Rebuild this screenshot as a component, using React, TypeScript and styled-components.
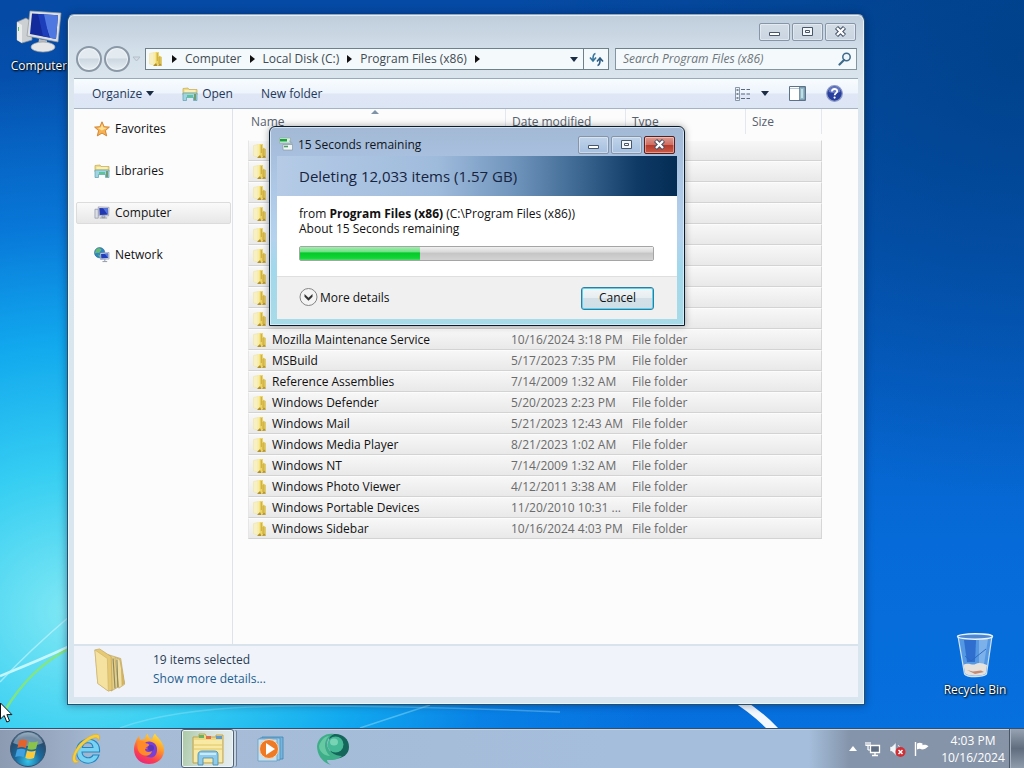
import React from 'react';
import styled, { createGlobalStyle } from 'styled-components';

const GlobalStyle = createGlobalStyle`
  * { box-sizing: border-box; }
  html, body { margin: 0; height: 100%; overflow: hidden; }
  body, button, input, table {
    font-family: 'Open Sans', 'Noto Sans', sans-serif;
    font-size: 12px;
    line-height: 16px;
  }
  button { padding: 0; border: 0; background: none; color: inherit; }
  a { text-decoration: none; color: inherit; }
  svg { display: block; flex: none; }
  #root { height: 100%; }
`;

const Screen = styled.div`
  display: flex;
  flex-direction: column;
  height: 100vh;
`;

const Desktop = styled.main`
  position: relative;
  flex: 1;
  overflow: hidden;
  background:
    radial-gradient(ellipse 58% 74% at 7% 84%, rgba(128, 232, 244, 1) 0%, rgba(54, 206, 242, 1) 26%, rgba(18, 172, 240, 0.95) 50%, rgba(10, 140, 235, 0.6) 72%, rgba(10, 120, 225, 0) 100%),
    radial-gradient(ellipse 50% 60% at 100% 8%, rgba(0, 64, 134, 0.85) 0%, rgba(0, 70, 150, 0) 100%),
    linear-gradient(180deg, #054aa4 0%, #055bc0 40%, #066bd8 75%, #0670de 100%);
`;

const Wallpaper = styled.svg`
  position: absolute;
  inset: 0;
  width: 100%;
  height: 100%;
`;

const Shortcut = styled.button<{ $place: 'top' | 'bottom' }>`
  position: absolute;
  ${p => (p.$place === 'top' ? 'left: 0; top: 8px;' : 'right: 10px; bottom: 30px;')}
  width: 78px;
  display: flex;
  flex-direction: column;
  align-items: center;
  gap: 4px;
  color: #fff;
  text-shadow: 1px 1px 2px #000, 0 0 2px #000;
`;

const Cursor = styled.svg`
  position: absolute;
  left: 0;
  bottom: 4px;
`;

/* ---------- Explorer window ---------- */

const Explorer = styled.section`
  position: absolute;
  left: 67px;
  right: 159px;
  top: 14px;
  bottom: 23px;
  display: flex;
  flex-direction: column;
  padding: 0 6px 7px;
  border: 1px solid #274f6c;
  border-top-color: #93a9bb;
  border-radius: 7px 7px 0 0;
  background: linear-gradient(180deg, #bfcddb 0, #d3dfe9 36px, #dbe6ee 70px, #d9e6ef 100%);
  box-shadow: inset 0 0 0 1px rgba(240, 248, 255, 0.8), 0 0 8px rgba(0, 20, 60, 0.45);
`;

const Titlebar = styled.header<{ $height: number; $top?: number }>`
  display: flex;
  align-items: center;
  height: ${p => p.$height}px;
  padding: ${p => p.$top ?? 0}px 2px 0;
`;

const Caption = styled.div`
  display: flex;
  gap: 2px;
  margin-left: auto;
`;

const CaptionButton = styled.button<{ $kind?: 'close' | 'blue' }>`
  display: grid;
  place-items: center;
  width: 31px;
  height: 18px;
  border: 1px solid ${p => (p.$kind === 'close' ? '#5c1d1d' : '#8795a8')};
  border-radius: 2px;
  box-shadow: inset 0 0 0 1px rgba(255, 255, 255, 0.4);
  background: ${p =>
    p.$kind === 'close'
      ? 'linear-gradient(#dd9a90 0, #cf6d60 48%, #b43a2c 50%, #cb5b46 100%)'
      : p.$kind === 'blue'
        ? 'linear-gradient(#c0d3ea, #a6c0df)'
        : 'linear-gradient(#d3dde7, #c9d5e1)'};
`;

const AddressRow = styled.div`
  display: flex;
  align-items: center;
  height: 22px;
  margin-bottom: 8px;
  padding-right: 1px;
`;

const NavButtons = styled.div`
  display: flex;
  align-items: center;
  width: 71px;
  gap: 2px;
  padding-left: 2px;
`;

const RoundButton = styled.button`
  width: 26px;
  height: 26px;
  border: 2px solid #8b98a6;
  border-radius: 50%;
  background: linear-gradient(#e3ebf1 0 45%, #ccd7e0 50%, #e6eef4 100%);
  box-shadow: inset 0 0 0 1px #eef3f7;
`;

const AddressBox = styled.div`
  display: flex;
  flex: 1;
  align-items: stretch;
  height: 22px;
  border: 1px solid #6e8089;
  background: #f4f9fc;
`;

const Crumbs = styled.nav`
  display: flex;
  flex: 1;
  align-items: center;
  gap: 8px;
  padding: 0 5px 0 2px;
  color: #414b52;
`;

const CrumbButton = styled.button`
  white-space: nowrap;
`;

const RefreshButton = styled.button`
  display: grid;
  place-items: center;
  width: 25px;
  border-left: 1px solid #6e8089;
`;

const SearchBox = styled.label`
  display: flex;
  align-items: center;
  width: 242px;
  height: 22px;
  margin-left: 6px;
  padding: 0 4px 0 7px;
  border: 1px solid #8495a0;
  border-top-color: #6e8089;
  background: #f4f9fc;
`;

const SearchInput = styled.input`
  flex: 1;
  min-width: 0;
  padding: 0;
  border: 0;
  outline: 0;
  background: transparent;
  font-style: italic;
  &::placeholder { color: #6d7579; opacity: 1; }
`;

const Body = styled.div`
  display: flex;
  flex: 1;
  flex-direction: column;
  min-height: 0;
  border-top: 1px solid #97a9bb;
  background: #fcfcfc;
`;

const Toolbar = styled.div`
  display: flex;
  align-items: center;
  height: 30px;
  padding: 0 15px 0 18px;
  border-bottom: 1px solid #a5b3c6;
  background: linear-gradient(#f8fcff 0, #eef4fc 48%, #dfe7f6 52%, #dde6f5 100%);
  color: #1e395b;
`;

const ToolButton = styled.button`
  display: flex;
  align-items: center;
  gap: 4px;
`;

const ToolGroup = styled.div<{ $gap: number; $end?: boolean }>`
  display: flex;
  align-items: center;
  gap: ${p => p.$gap}px;
  margin-left: ${p => (p.$end ? 'auto' : '0')};
`;

const Panes = styled.div`
  display: flex;
  flex: 1;
  min-height: 0;
`;

const Sidebar = styled.nav`
  display: flex;
  flex-direction: column;
  gap: 20px;
  width: 159px;
  padding: 9px 1px 0 2px;
  border-right: 1px solid #dde3ec;
`;

const SideLink = styled.a<{ $active?: boolean }>`
  display: flex;
  align-items: center;
  gap: 5px;
  height: 22px;
  padding-left: 17px;
  border: 1px solid ${p => (p.$active ? '#dcdcdc' : 'transparent')};
  border-radius: 2px;
  background: ${p => (p.$active ? 'linear-gradient(#fafafa, #e7e7e7)' : 'none')};
  color: #111;
`;

const ListPane = styled.div`
  flex: 1;
  padding-left: 15px;
  min-width: 0;
  overflow: hidden;
`;

const FileTable = styled.table`
  width: 574px;
  table-layout: fixed;
  border-collapse: separate;
  border-spacing: 0;
  color: #6b6b6b;
`;

const HeadCell = styled.th<{ $width: number }>`
  position: relative;
  width: ${p => p.$width}px;
  height: 31px;
  padding: 5px 0 0 6px;
  vertical-align: top;
  text-align: left;
  font-weight: 400;
  color: #56606e;
  background: linear-gradient(#e3e8ef, #e3e8ef) right top / 1px 25px no-repeat;
  &:first-child { padding-left: 3px; }
`;

const SortMark = styled.svg`
  position: absolute;
  left: 123px;
  top: 1px;
`;

const Row = styled.tr`
  background: linear-gradient(#f8f8f8, #e8e8e8);
`;

const Cell = styled.td`
  height: 21px;
  padding: 0 0 0 6px;
  border-top: 1px solid #fcfcfc;
  border-bottom: 1px solid #d3d3d3;
  overflow: hidden;
  white-space: nowrap;
  &:first-child { padding-left: 3px; border-left: 1px solid #e6e6e6; }
  &:nth-child(2) { padding-left: 5px; }
  &:last-child { border-right: 1px solid #d6d6d6; }
`;

const NameLine = styled.span`
  display: flex;
  align-items: center;
  gap: 4px;
  color: #111;
`;

const Details = styled.footer`
  display: flex;
  align-items: center;
  gap: 22px;
  height: 53px;
  padding: 0 0 4px 18px;
  border-top: 2px solid #d9e3ec;
  background: #f0f4fa;
`;

const DetailText = styled.div`
  display: flex;
  flex-direction: column;
  gap: 3px;
  color: #2b3c55;
`;

const DetailLink = styled.a`
  color: #1d6091;
`;

/* ---------- Progress dialog ---------- */

const Dialog = styled.section`
  position: absolute;
  left: 269px;
  top: 126px;
  width: 416px;
  padding: 0 7px 6px;
  border: 1px solid #0d1c2b;
  border-radius: 6px 6px 0 0;
  background: linear-gradient(180deg, #a3b9d6 0, #adc8e6 60px, #b4d2ee 110px, #a2d8ec 140px, #a8dbe8 100%);
  box-shadow: inset 0 0 0 1px rgba(225, 242, 252, 0.75), 0 0 7px rgba(0, 0, 0, 0.35);
`;

const DialogTitle = styled.h1`
  display: flex;
  align-items: center;
  gap: 5px;
  margin: 0;
  font-size: 12px;
  font-weight: 400;
  color: #10151c;
`;

const Banner = styled.h2`
  display: flex;
  align-items: center;
  height: 40px;
  margin: 0;
  padding-left: 22px;
  font-size: 15px;
  line-height: 22px;
  font-weight: 400;
  color: #16243f;
  background: linear-gradient(90deg, #b5cbe6 0, #9fbbdc 40%, #6e93bb 60%, #3b6690 76%, #0f3a66 90%, #042c54 100%);
`;

const DialogBody = styled.div`
  height: 80px;
  padding: 10px 23px 0 22px;
  background: #fff;
  color: #111;
`;

const Line = styled.p`
  margin: 0;
  line-height: 15px;
`;

const Progress = styled.progress`
  display: block;
  width: 100%;
  height: 15px;
  margin-top: 10px;
  appearance: none;
  border: 1px solid #a5a5a5;
  border-radius: 2px;
  &::-webkit-progress-bar {
    background: linear-gradient(#f0f0f0 0, #dcdcdc 35%, #c6c6c6 50%, #d3d3d3 100%);
  }
  &::-webkit-progress-value {
    background: linear-gradient(#a3eeb0 0, #6fe084 38%, #05c92a 45%, #10d534 85%, #4bdc66 100%);
  }
`;

const DialogFoot = styled.div`
  display: flex;
  align-items: center;
  justify-content: space-between;
  height: 43px;
  padding: 0 23px 0 22px;
  border-top: 1px solid #dfdfdf;
  background: #f0f0f0;
  color: #111;
`;

const MoreButton = styled.button`
  display: flex;
  align-items: center;
  gap: 2px;
`;

const CancelButton = styled.button`
  width: 73px;
  height: 23px;
  border: 1px solid #2c7f9f;
  border-radius: 3px;
  box-shadow: inset 0 0 0 1px #5fd0ee;
  background: linear-gradient(#f2f6f8 0, #e6edf0 48%, #d3dfe6 50%, #cfe0e8 100%);
`;

/* ---------- Taskbar ---------- */

const Taskbar = styled.footer`
  display: flex;
  align-items: center;
  height: 40px;
  border-top: 1px solid #33506e;
  box-shadow: inset 0 1px 0 #c5d5e6;
  background: linear-gradient(90deg, #8d9bb2 0, #98a8c0 5%, #a6bbd6 10%, #a5bedb 60%, #a5bedb 79%, #8494aa 83%, #8794a8 100%);
`;

const StartButton = styled.button`
  display: grid;
  place-items: center;
  width: 56px;
  height: 100%;
`;

const TaskButton = styled.button<{ $active?: boolean }>`
  display: grid;
  place-items: center;
  width: ${p => (p.$active ? 53 : 62)}px;
  height: 39px;
  margin: ${p => (p.$active ? '0 6px 0 1px' : '0')};
  border: ${p => (p.$active ? '1px solid #506278' : '0')};
  border-radius: 3px;
  box-shadow: ${p => (p.$active ? 'inset 0 0 0 1px #eef5f2, 3px 0 0 -1px #c5d3e2, 4px 0 0 -1px #6d7f96' : 'none')};
  background: ${p => (p.$active ? 'linear-gradient(100deg, #a9c8a4 0, #d3e0d8 45%, #e6edf0 100%)' : 'none')};
`;

const Tray = styled.div`
  display: flex;
  align-items: center;
  gap: 8px;
  height: 100%;
  margin-left: auto;
`;

const Clock = styled.time`
  width: 72px;
  text-align: center;
  color: #fff;
  line-height: 17px;
`;

const ShowDesktop = styled.button`
  width: 15px;
  height: 100%;
  border-left: 1px solid #4a5666;
  box-shadow: inset 1px 0 0 #aab6c4;
  background: linear-gradient(#97a3b2, #5f6d7e 50%, #8f9cac);
`;

/* ---------- Drawings ---------- */

const FolderIcon = () => (
  <svg width="16" height="16" viewBox="0 0 16 16" aria-hidden="true">
    <path d="M1.500 2.500 6 1.500v12.500l-4.500-1z" fill="#f8f0c0" stroke="#efe4a8" strokeWidth=".6" />
    <path d="M6 1h5v13.500l-5 .3z" fill="#ecd566" />
    <path d="M6 1h1.700v12H6z" fill="#f9ee9e" />
    <path d="M10.800 4.500 13.800 6v8.500h-3z" fill="#dcc257" />
    <path d="M9.300 2v8M11 6v7" stroke="#c8a63a" strokeWidth=".9" />
    <path d="M5 15l3-3 1.500 3zM10 15l2-2.500 2 2z" fill="#b08f30" />
  </svg>
);

const LibraryIcon = () => (
  <svg width="16" height="16" viewBox="0 0 16 16" aria-hidden="true">
    <path d="M1 2.500 6 2l1 1.500h8V9H1z" fill="#f0dc80" stroke="#c3aa56" strokeWidth=".7" />
    <path d="M2.500 5h11" stroke="#fff7cf" strokeWidth="1.400" />
    <path d="M1 7h14v7.500h-3.500V11.500h-7v3H1z" fill="#a0d4e2" stroke="#5b9db0" strokeWidth=".7" />
    <path d="M5 11.500V9h6v2.500" fill="#5cc49a" />
    <path d="M12 8h2v6h-2z" fill="#6f9c74" />
  </svg>
);

const StarIcon = () => (
  <svg width="16" height="16" viewBox="0 0 16 16" aria-hidden="true">
    <path d="m8 .8 2.100 4.900 5.300.4-4 3.500 1.300 5.300L8 12.100l-4.700 2.800 1.300-5.300-4-3.500 5.300-.4z" fill="#f6b352" stroke="#cf7d2d" strokeWidth=".9" strokeLinejoin="round" />
    <path d="m8 3 1.300 3.500 3.500.5-5 2.500-4-2.500 3-.5z" fill="#ffe19a" />
  </svg>
);

const PcIcon = () => (
  <svg width="16" height="16" viewBox="0 0 17 16" aria-hidden="true">
    <path d="M1 4h3.500v9.500H1z" fill="#dcdfe6" stroke="#878da0" strokeWidth=".7" />
    <path d="M4.500 1.500 16 2l-.5 9H5z" fill="#e1e4ec" stroke="#8b90a5" strokeWidth=".7" />
    <path d="m5.600 2.600 9.300.3-.4 7-8.500.1z" fill="#2138b2" />
    <path d="m9.500 2.700 5.400.2-.4 7z" fill="#5674da" />
    <path d="M8.500 11h3v2h-3zM6 13.300h8" stroke="#9097a8" fill="#c9cdd8" />
  </svg>
);

const NetworkIcon = () => (
  <svg width="16" height="16" viewBox="0 0 17 17" aria-hidden="true">
    <circle cx="6" cy="6" r="5.500" fill="#2f86c4" stroke="#27618f" strokeWidth=".6" />
    <path d="M2 3c2-2.500 5-2 6 0L5.500 6.500 3 6l-2 1zM4 8l3 1-1 2z" fill="#66bb72" />
    <path d="M6.500 6.500 16 5.800v7l-9 .5z" fill="#dfe4f0" stroke="#7c86a0" strokeWidth=".6" />
    <path d="M7.500 7.500 15 6.800v5l-7.300.4z" fill="#223eb8" />
    <path d="m11.500 7.100 3.500-.3v5z" fill="#5878dd" />
    <path d="M9 15.500h5M11.500 13v2" stroke="#8d95a6" />
  </svg>
);

const BigPcIcon = () => (
  <svg width="46" height="46" viewBox="0 0 46 46" aria-hidden="true">
    <path d="m1 14 9-4 6 4v18L6 35l-5-3z" fill="#cdd0d2" stroke="#878d92" strokeWidth=".7" />
    <path d="m1 14 5 3v18l-5-3z" fill="#e9ebec" />
    <path d="M2.500 19v4" stroke="#4fbb65" />
    <path d="M14 3 45 5l-3 29L11 28z" fill="#dde0e3" stroke="#92989d" strokeWidth=".7" />
    <path d="m16 5.500 26 1.800L40 31l-26-5z" fill="#122a9c" />
    <path d="M26 6.200 42 7.300 40 31l-6-1.200z" fill="#4f78e0" />
    <path d="m22 6 6 .3 5 23-6-1z" fill="#1c3ebb" />
    <path d="m23 31 8 1.500v5h-9z" fill="#b9bdc1" />
    <ellipse cx="27" cy="39" rx="12" ry="5" fill="#e4e6e7" stroke="#9ca1a5" strokeWidth=".7" />
  </svg>
);

const BinIcon = () => (
  <svg width="40" height="46" viewBox="0 0 40 46" aria-hidden="true">
    <path d="M3 4h34l-5.500 38c-4 3.500-19 3.500-22 0z" fill="#6fa6e6" fillOpacity=".75" stroke="#cfe2f6" strokeWidth="1.200" />
    <path d="M9 8h12l-1 22h-8z" fill="#1f5dc4" fillOpacity=".7" />
    <path d="m24 8 9-1-4 25-5 2z" fill="#a6ccf2" fillOpacity=".5" />
    <path d="M8.500 33c5-3 9 1 12-1s7-1 11.500 1l-1.200 8.500c-4 3-17 3-20.600 0z" fill="#e5e2dd" />
    <path d="m12 38 6 1.500 8-1 3 1.500-9 2z" fill="#c68b72" />
    <path d="m10 24 6 5 5-4 10-8" stroke="#2b66c0" strokeWidth=".9" fill="none" />
    <ellipse cx="20" cy="4.500" rx="17.500" ry="2.700" fill="#4f88d2" stroke="#e9f3fc" strokeWidth="1.400" />
  </svg>
);

const StackIcon = () => (
  <svg width="39" height="46" viewBox="0 0 39 48" preserveAspectRatio="xMinYMid meet" aria-hidden="true">
    <path d="m17 8 13 4 4 26-14 8z" fill="#e6cd85" stroke="#b59a52" strokeWidth=".6" />
    <path d="m24 11 5 2 5 26-6 4z" fill="#f0dfa4" stroke="#b59a52" strokeWidth=".6" />
    <path d="m30 16 4 22-3 3z" fill="#d3b261" />
    <path d="m22 12 2 31M26 13l1 29" stroke="#8b8a64" strokeWidth="1.200" />
    <path d="m3 3 5-1 12 8 1 35-4 1L6 38z" fill="#e6c974" stroke="#b79b52" strokeWidth=".6" />
    <path d="m3 3 13 9 1 34L6 38z" fill="#f5e2a0" stroke="#c9b069" strokeWidth=".6" />
  </svg>
);

const MinGlyph = () => (
  <svg width="13" height="11" viewBox="0 0 13 11" aria-hidden="true">
    <path d="M1.500 6.500h10v3h-10z" fill="#fff" stroke="#48566a" />
  </svg>
);

const MaxGlyph = () => (
  <svg width="13" height="11" viewBox="0 0 13 11" aria-hidden="true">
    <path d="M1.500 1.500h10v8h-10z" fill="#f5f8fb" stroke="#48566a" />
    <path d="M4.500 4.500h4v2h-4z" fill="#fff" stroke="#48566a" />
  </svg>
);

const CloseGlyph = () => (
  <svg width="13" height="11" viewBox="0 0 13 11" aria-hidden="true">
    <path d="m2.500 1.500 8 8m0-8-8 8" stroke="#48566a" strokeWidth="4.400" />
    <path d="m3 2 7 7m0-7-7 7" stroke="#fff" strokeWidth="2.300" />
  </svg>
);

const RightArrow = () => (
  <svg width="5" height="8" viewBox="0 0 5 8" aria-hidden="true">
    <path d="M0 0v8l5-4z" fill="#111" />
  </svg>
);

const DownArrow = () => (
  <svg width="8" height="5" viewBox="0 0 8 5" aria-hidden="true">
    <path d="M0 0h8L4 5z" fill="#1b2c45" />
  </svg>
);

const RefreshIcon = () => (
  <svg width="15" height="15" viewBox="0 0 15 15" aria-hidden="true">
    <path d="M6.500 1.500C4.500 2 3.800 4 4 8M1 5.500l3 3.500 3-3.500" fill="none" stroke="#39759b" strokeWidth="1.600" />
    <path d="M8.500 13.500c2-.5 2.700-2.500 2.500-6.500M8 9.500 11 6l3 3.500" fill="none" stroke="#2b5a80" strokeWidth="1.600" />
  </svg>
);

const SearchIcon = () => (
  <svg width="14" height="14" viewBox="0 0 14 14" aria-hidden="true">
    <circle cx="8.500" cy="5" r="3.700" fill="#eef6fb" stroke="#3d6a8b" strokeWidth="1.500" />
    <path d="m6 8-4.500 4.500" stroke="#3d6a8b" strokeWidth="2.200" strokeLinecap="round" />
  </svg>
);

const ViewIcon = () => (
  <svg width="16" height="14" viewBox="0 0 16 14" aria-hidden="true">
    <path d="M.5.5h4v13h-4z" fill="#eef3f8" stroke="#6f8094" strokeWidth=".8" />
    <path d="M1.500 3h2M1.500 7h2M1.500 11h2" stroke="#56697f" strokeWidth="1.500" />
    <path d="M6 2.500h4M11.500 2.500H15M6 7h4M11.500 7H15M6 11.500h4M11.500 11.500H15" stroke="#56697f" />
  </svg>
);

const PaneIcon = () => (
  <svg width="17" height="15" viewBox="0 0 17 15" aria-hidden="true">
    <path d="M.5.5h16v14H.5z" fill="#fff" stroke="#5c7289" />
    <path d="M1 2.500h10" stroke="#b9c6d3" />
    <path d="M10.500 1H16v13h-5.500z" fill="#8fb7c6" stroke="#5c7289" strokeWidth=".7" />
    <path d="M12 3h2v9h-2z" fill="#c3dde4" />
  </svg>
);

const HelpIcon = () => (
  <svg width="17" height="17" viewBox="0 0 17 17" aria-hidden="true">
    <circle cx="8.500" cy="8.500" r="7.800" fill="#283f9d" stroke="#8d9bc6" strokeWidth="1.200" />
    <path d="M2.500 6.500a6 5 0 0 1 12 0c-3 2-9 2-12 0z" fill="#7d90d3" fillOpacity=".7" />
    <path d="M5.900 6.500c0-3.300 5.300-3.300 5.300-.3 0 1.900-2.500 1.900-2.500 4" fill="none" stroke="#fff" strokeWidth="1.800" />
    <circle cx="8.600" cy="12.600" r="1.100" fill="#fff" />
  </svg>
);

const CopyIcon = () => (
  <svg width="14" height="15" viewBox="0 0 14 15" aria-hidden="true">
    <path d="M.5 1h11v5H.5z" fill="#d8f0dc" stroke="#8da59a" strokeWidth=".6" />
    <path d="M1 2h7v2.500H1z" fill="#16a53d" />
    <path d="M4 7.500h9.500v5.500H4z" fill="#f1f6f4" stroke="#869aa0" strokeWidth=".7" />
    <path d="M5 9.500h4" stroke="#4f9b66" strokeWidth="1.600" />
    <path d="M10 4c3 .5 3 2 3 4" fill="none" stroke="#9aadb9" />
  </svg>
);

const ExpandIcon = () => (
  <svg width="19" height="20" viewBox="0 0 19 20" aria-hidden="true">
    <circle cx="9.500" cy="9" r="8.500" fill="#f4f4f4" stroke="#848484" />
    <path d="m5.500 6 4 3.800 4-3.800v2.800l-4 4-4-4z" fill="#333" />
  </svg>
);

const StartOrb = () => (
  <svg width="38" height="38" viewBox="0 0 38 38" aria-hidden="true">
    <defs>
      <radialGradient id="orb" cx=".5" cy=".85" r=".9">
        <stop offset="0" stopColor="#35c3ea" />
        <stop offset=".4" stopColor="#1b6a9c" />
        <stop offset=".75" stopColor="#27496a" />
        <stop offset="1" stopColor="#8da4b7" />
      </radialGradient>
    </defs>
    <circle cx="19" cy="19" r="17.500" fill="url(#orb)" stroke="#33516d" />
    <path d="M4 13a16 16 0 0 1 30 0c-9 4-21 4-30 0z" fill="#dce9f2" fillOpacity=".42" />
    <path d="M10 10.500c3.200-1.500 5.800-1 8.500.3l-1.600 7.500c-2.700-1.500-5.300-1.600-8.500-.3z" fill="#e4622c" />
    <path d="M20 11.500c3.200 1.300 5.800 1 9-.3l-1.900 7.500c-3.200 1.300-5.800 1.300-8.700.2z" fill="#8bc249" />
    <path d="M8 19.500c3.200-1.300 5.800-1 8.500.3l-1.800 7.500c-2.700-1.400-5.300-1.500-8.500-.2z" fill="#41a0e0" />
    <path d="M18 20.500c3.200 1.300 5.700 1.200 8.800 0l-1.800 7.500c-3.200 1.300-5.800 1.200-8.700 0z" fill="#fbc93c" />
  </svg>
);

const IeIcon = () => (
  <svg width="32" height="34" viewBox="0 0 32 34" aria-hidden="true">
    <path d="M28.500 20H11c.3 6.500 9 7.500 11 3h6c-2.500 7-9 9.500-15 7.500-9-3-10-16-2.500-21C19 4 29.500 9 28.500 20zM11.300 15.500H22c-.5-6-9.500-6.500-10.700 0z" fill="#7ad2f3" stroke="#1f86c4" strokeWidth="1.100" />
    <path d="M2.500 30C-1 25 6 12 16 6c6-4 12-5 12.500-1.500.2 1.500-.5 3-1.500 4.500.5-3-1-4-4-3C13 9 3.500 21 4.500 27c.3 1.800 2 2.500 4 2-2.500 2-4.800 2.500-6 1z" fill="#f7cf3d" stroke="#d9a520" strokeWidth=".5" />
  </svg>
);

const FirefoxIcon = () => (
  <svg width="32" height="33" viewBox="0 0 32 33" aria-hidden="true">
    <defs>
      <linearGradient id="fox" x1=".8" y1="0" x2=".3" y2="1">
        <stop offset="0" stopColor="#ffe43f" />
        <stop offset=".4" stopColor="#ff9a2a" />
        <stop offset=".75" stopColor="#fb4050" />
        <stop offset="1" stopColor="#e8277c" />
      </linearGradient>
    </defs>
    <path d="M3 9c1-2.500 2-4 3-5l1 4c2-1 3.500-1 5-.7C12 4.500 13 3 15 2c0 3 2 4.500 4 5.500C20 4.500 20.500 3 22 1.500c1 3 9 8 9 16.500 0 8.500-6.500 14-15 14S1 26 1 17c0-3 1-6 2-8z" fill="url(#fox)" />
    <path d="M13 10c6-2 12 2 11 9s-6 7-9 6-6-4-6-8c2 1 4 0 6-1-2 0-3-1-3-2.500 0-1 0-3 1-3.500z" fill="#7a3fd4" />
    <path d="M5 9c3 .5 6-.5 7 1.500 1 1.500 4 .5 4 2.500s-4 1.500-4 4c0 3 4 4 7 2-1 5-7 6-11 3s-4-8-3-13z" fill="#ff8a2a" />
    <circle cx="18" cy="16" r="3" fill="#5a36b9" />
  </svg>
);

const ExplorerIcon = () => (
  <svg width="34" height="34" viewBox="0 0 34 34" aria-hidden="true">
    <path d="M2 5h6V2h6l2 3h9V3h7v28H2z" fill="#eed983" stroke="#b89a44" strokeWidth=".8" />
    <path d="M8 3h5v3H8z" fill="#65b268" /><path d="M15 4h5v3h-5z" fill="#df6f4a" /><path d="M25 4h6v3h-6z" fill="#5d9bd2" />
    <path d="M3 8h28v22H3z" fill="#f8e9a4" />
    <path d="M3 13h28M3 17h28" stroke="#e0c667" />
    <path d="M7 33V23c0-3 2-4 4-4h12c3 0 4 1 4 4v10h-5v-7H12v7z" fill="#8ecbea" stroke="#4189b4" strokeWidth=".8" />
    <path d="M9 22h16" stroke="#dff3fc" strokeWidth="1.500" />
  </svg>
);

const MediaIcon = () => (
  <svg width="28" height="26" viewBox="0 0 28 26" aria-hidden="true">
    <path d="M5 1h21v22H5z" fill="#74b5dd" stroke="#3f86b5" strokeWidth=".8" />
    <path d="M3 2h20v22H3z" fill="#9cceea" stroke="#4b90bd" strokeWidth=".8" />
    <path d="M1 3h19v22H1z" fill="#c4e1f1" stroke="#6a9fc2" strokeWidth=".8" />
    <circle cx="12" cy="13" r="9.500" fill="#ee7a26" stroke="#fbd6b2" />
    <path d="m9 7 9 6-9 6z" fill="#fff" />
  </svg>
);

const GreenIcon = () => (
  <svg width="32" height="32" viewBox="0 0 32 32" aria-hidden="true">
    <path d="M12 3c8-5 20 0 20 11 0 9-10 14-18 10z" fill="#14655a" />
    <path d="M0 13C1 5 8 0 17 1 9 5 8 14 14 19c4 3 8 4 11 4-6 5-12 4-15 4 0 2 2 4 5 5C7 31 0 23 0 13z" fill="#3dae88" />
    <path d="M2 13C4 7 8 3 12 3c-6 6-5 14 1 20C8 23 2 19 2 13z" fill="#67c9a4" />
    <circle cx="18.500" cy="11.500" r="8" fill="#45b896" />
    <ellipse cx="17" cy="9" rx="4" ry="3.500" fill="#8fdfc2" fillOpacity=".7" />
  </svg>
);

const TrayNetwork = () => (
  <svg width="16" height="16" viewBox="0 0 16 16" aria-hidden="true">
    <path d="M5.500 4.500h9v7h-9z" fill="#5f6e82" stroke="#fff" strokeWidth="1.300" />
    <path d="M7 14.500h6M10 12v2.500" stroke="#fff" strokeWidth="1.400" />
    <path d="M1 1v3.500h4V1M3 1v8M3 9h2" fill="none" stroke="#fff" strokeWidth="1.200" />
  </svg>
);

const TraySound = () => (
  <svg width="17" height="16" viewBox="0 0 17 16" aria-hidden="true">
    <path d="M1 5.500h2L7 1.500v13l-4-4H1z" fill="#f3f6f9" stroke="#76859a" strokeWidth=".5" />
    <path d="M9 4c1 1 1.500 2 1.500 3" stroke="#e5ebf2" fill="none" />
    <circle cx="11.500" cy="11" r="5" fill="#d22d33" />
    <path d="m9.500 9 4 4m0-4-4 4" stroke="#fff" strokeWidth="1.500" />
  </svg>
);

const TrayFlag = () => (
  <svg width="15" height="16" viewBox="0 0 15 16" aria-hidden="true">
    <path d="M1.500 1v14" stroke="#fff" strokeWidth="1.400" />
    <path d="M3 2.500c2-1 3.500-1 5.500 0v1.700c2-.7 3.500-.5 6 1-2 2-4.500 3.300-6.500 3.300-1.500-1-3-1-5 0z" fill="#fff" />
  </svg>
);

/* ---------- Data ---------- */

type FileRow = { name?: string; date?: string; type?: string };

const covered: FileRow[] = Array.from({ length: 9 }, () => ({}));
const folder = (name: string, date: string): FileRow => ({ name, date, type: 'File folder' });

const rows: FileRow[] = [
  ...covered,
  folder('Mozilla Maintenance Service', '10/16/2024 3:18 PM'),
  folder('MSBuild', '5/17/2023 7:35 PM'),
  folder('Reference Assemblies', '7/14/2009 1:32 AM'),
  folder('Windows Defender', '5/20/2023 2:23 PM'),
  folder('Windows Mail', '5/21/2023 12:43 AM'),
  folder('Windows Media Player', '8/21/2023 1:02 AM'),
  folder('Windows NT', '7/14/2009 1:32 AM'),
  folder('Windows Photo Viewer', '4/12/2011 3:38 AM'),
  folder('Windows Portable Devices', '11/20/2010 10:31 ...'),
  folder('Windows Sidebar', '10/16/2024 4:03 PM'),
];

const places = [
  { label: 'Favorites', icon: <StarIcon /> },
  { label: 'Libraries', icon: <LibraryIcon /> },
  { label: 'Computer', icon: <PcIcon />, active: true },
  { label: 'Network', icon: <NetworkIcon /> },
];

const crumbs = ['Computer', 'Local Disk (C:)', 'Program Files (x86)'];

const tasks = [
  { label: 'Internet Explorer', icon: <IeIcon /> },
  { label: 'Firefox', icon: <FirefoxIcon /> },
  { label: 'File manager', icon: <ExplorerIcon />, active: true },
  { label: 'Media Player', icon: <MediaIcon /> },
  { label: 'Browser', icon: <GreenIcon /> },
];

const CaptionButtons = ({ dialog }: { dialog?: boolean }) => (
  <Caption>
    <CaptionButton $kind={dialog ? 'blue' : undefined} aria-label="Minimize"><MinGlyph /></CaptionButton>
    <CaptionButton $kind={dialog ? 'blue' : undefined} aria-label="Maximize"><MaxGlyph /></CaptionButton>
    <CaptionButton $kind={dialog ? 'close' : undefined} aria-label="Close"><CloseGlyph /></CaptionButton>
  </Caption>
);

const ExplorerWindow = () => (
  <Explorer>
    <Titlebar $height={33}><CaptionButtons /></Titlebar>
    <AddressRow>
      <NavButtons>
        <RoundButton aria-label="Back" />
        <RoundButton aria-label="Forward" />
        <svg width="9" height="6" viewBox="0 0 9 6" aria-hidden="true">
          <path d="M1 1h7L4.500 5z" fill="#d3dce4" stroke="#b3bfca" />
        </svg>
      </NavButtons>
      <AddressBox>
        <Crumbs aria-label="Address">
          <FolderIcon />
          <RightArrow />
          {crumbs.map(c => (
            <React.Fragment key={c}>
              <CrumbButton>{c}</CrumbButton>
              <RightArrow />
            </React.Fragment>
          ))}
          <ToolGroup $gap={0} $end><DownArrow /></ToolGroup>
        </Crumbs>
        <RefreshButton aria-label="Refresh"><RefreshIcon /></RefreshButton>
      </AddressBox>
      <SearchBox>
        <SearchInput type="text" placeholder="Search Program Files (x86)" aria-label="Search" />
        <SearchIcon />
      </SearchBox>
    </AddressRow>
    <Body>
      <Toolbar>
        <ToolGroup $gap={28}>
          <ToolButton>Organize <DownArrow /></ToolButton>
          <ToolButton><LibraryIcon />Open</ToolButton>
          <ToolButton>New folder</ToolButton>
        </ToolGroup>
        <ToolGroup $gap={20} $end>
          <ToolGroup $gap={10}>
            <ToolButton aria-label="Change view"><ViewIcon /></ToolButton>
            <ToolButton aria-label="More views"><DownArrow /></ToolButton>
          </ToolGroup>
          <ToolButton aria-label="Preview pane"><PaneIcon /></ToolButton>
          <ToolButton aria-label="Help"><HelpIcon /></ToolButton>
        </ToolGroup>
      </Toolbar>
      <Panes>
        <Sidebar>
          {places.map(p => (
            <SideLink key={p.label} href="#" $active={p.active}>{p.icon}{p.label}</SideLink>
          ))}
        </Sidebar>
        <ListPane>
          <FileTable>
            <thead>
              <tr>
                <HeadCell $width={258}>
                  Name
                  <SortMark width="8" height="4" viewBox="0 0 8 4" aria-hidden="true">
                    <path d="M0 4h8L4 0z" fill="#7f93a8" />
                  </SortMark>
                </HeadCell>
                <HeadCell $width={120}>Date modified</HeadCell>
                <HeadCell $width={120}>Type</HeadCell>
                <HeadCell $width={76}>Size</HeadCell>
              </tr>
            </thead>
            <tbody>
              {rows.map((r, i) => (
                <Row key={i}>
                  <Cell><NameLine><FolderIcon />{r.name}</NameLine></Cell>
                  <Cell>{r.date}</Cell>
                  <Cell>{r.type}</Cell>
                  <Cell />
                </Row>
              ))}
            </tbody>
          </FileTable>
        </ListPane>
      </Panes>
      <Details>
        <StackIcon />
        <DetailText>
          <span>19 items selected</span>
          <DetailLink href="#">Show more details...</DetailLink>
        </DetailText>
      </Details>
    </Body>
  </Explorer>
);

const ProgressDialog = () => (
  <Dialog role="dialog" aria-label="15 Seconds remaining">
    <Titlebar $height={29} $top={6}>
      <DialogTitle><CopyIcon />15 Seconds remaining</DialogTitle>
      <CaptionButtons dialog />
    </Titlebar>
    <Banner>Deleting 12,033 items (1.57 GB)</Banner>
    <DialogBody>
      <Line>from <b>Program Files (x86)</b> (C:\Program Files (x86))</Line>
      <Line>About 15 Seconds remaining</Line>
      <Progress value={34} max={100} aria-label="Progress" />
    </DialogBody>
    <DialogFoot>
      <MoreButton><ExpandIcon />More details</MoreButton>
      <CancelButton>Cancel</CancelButton>
    </DialogFoot>
  </Dialog>
);

export default function App() {
  return (
    <>
      <GlobalStyle />
      <Screen>
        <Desktop>
          <Wallpaper viewBox="0 0 1024 728" preserveAspectRatio="none" aria-hidden="true">
            <path d="M0 676Q40 660 70 646" stroke="#d8fbff" strokeWidth="2.500" fill="none" opacity=".85" />
            <path d="M0 682Q30 650 70 616" stroke="#bff4fb" strokeWidth="1.500" fill="none" opacity=".7" />
            <path d="M4 712Q30 668 70 648" stroke="#8ae86a" strokeWidth="2.500" fill="none" opacity=".85" />
            <path d="M120 728Q180 706 300 706T560 712" stroke="#a9ecfb" strokeWidth="1.500" fill="none" opacity=".35" />
            <path d="M360 728 430 705" stroke="#a9ecfb" strokeWidth="1.500" opacity=".4" />
            <path d="M727 698h14q22 14 37 30h-12q-16-16-39-30z" fill="#fff" opacity=".95" />
          </Wallpaper>
          <Shortcut $place="top"><BigPcIcon />Computer</Shortcut>
          <Shortcut $place="bottom"><BinIcon />Recycle Bin</Shortcut>
          <ExplorerWindow />
          <ProgressDialog />
          <Cursor width="13" height="21" viewBox="0 0 13 21" aria-hidden="true">
            <path d="M.5 0v16l3.700-3.500 2.600 6.500 2.700-1.100-2.600-6.300h5z" fill="#fff" stroke="#111" />
          </Cursor>
        </Desktop>
        <Taskbar>
          <StartButton aria-label="Start"><StartOrb /></StartButton>
          {tasks.map(t => (
            <TaskButton key={t.label} $active={t.active} aria-label={t.label}>{t.icon}</TaskButton>
          ))}
          <Tray>
            <svg width="8" height="5" viewBox="0 0 8 5" aria-hidden="true"><path d="M0 5h8L4 0z" fill="#fff" /></svg>
            <TrayNetwork />
            <TraySound />
            <TrayFlag />
            <Clock>4:03 PM<br />10/16/2024</Clock>
          </Tray>
          <ShowDesktop aria-label="Show desktop" />
        </Taskbar>
      </Screen>
    </>
  );
}
